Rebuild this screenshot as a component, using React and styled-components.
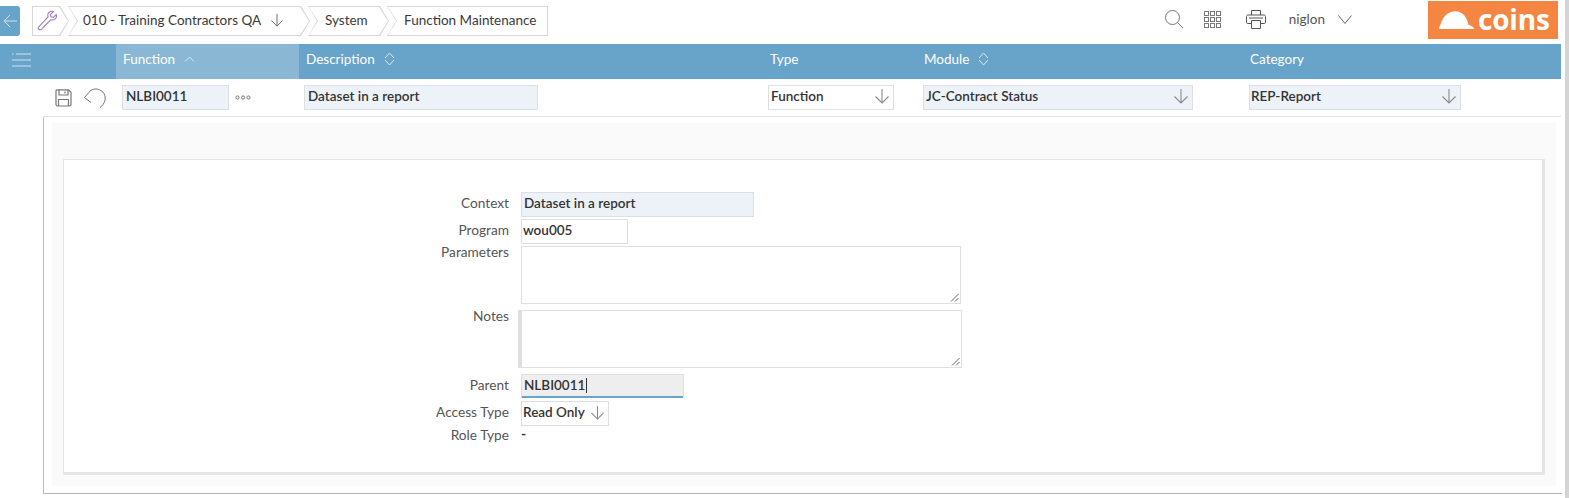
import React from "react";
import styled, { createGlobalStyle } from "styled-components";

const GlobalStyle = createGlobalStyle`
  html, body {
    margin: 0;
    padding: 0;
    background: #fff;
    overflow: hidden;
  }
  * {
    box-sizing: border-box;
  }
`;

const Page = styled.div`
  position: relative;
  width: 1569px;
  height: 498px;
  padding-right: 8px;
  font-family: Lato, "Open Sans", sans-serif;
  font-size: 13px;
  color: #333;
  overflow: hidden;
`;

const Scrollbar = styled.div`
  position: absolute;
  top: 0;
  right: 0;
  bottom: 0;
  width: 4px;
  background: #d4d4d4;
`;

const TopBar = styled.header`
  display: flex;
  align-items: flex-start;
  height: 44px;
  padding-top: 6px;
`;

const BackButton = styled.div`
  display: flex;
  align-items: center;
  justify-content: center;
  width: 20px;
  height: 30px;
  margin-right: 12px;
  background: #68a3c9;
  border-radius: 0 3px 3px 0;
`;

const Crumbs = styled.nav`
  display: flex;
`;

const crumbShape = (p) => {
  const notch = p.$first ? "" : ", 9px 50%";
  const right = p.$last
    ? "100% 0, 100% 100%"
    : "calc(100% - 9px) 0, 100% 50%, calc(100% - 9px) 100%";
  return `polygon(0 0, ${right}, 0 100%${notch})`;
};

const Crumb = styled.div`
  position: relative;
  display: flex;
  align-items: center;
  gap: ${(p) => (p.$gap ? "9px" : 0)};
  width: ${(p) => p.$width}px;
  height: 30px;
  margin-left: ${(p) => p.$overlap || 0}px;
  padding-left: ${(p) => p.$pad}px;
  padding-bottom: 2px;
  background: #d6d6d6;
  clip-path: ${crumbShape};
  font-size: 13.5px;
  color: #3a3a3a;
  white-space: nowrap;

  &::before {
    content: "";
    position: absolute;
    inset: 1px;
    background: #fff;
    clip-path: ${crumbShape};
  }
`;

const CrumbContent = styled.span`
  position: relative;
  display: flex;
  align-items: center;
`;

const TopActions = styled.div`
  display: flex;
  align-items: center;
  height: 30px;
  margin-top: -2px;
  margin-left: auto;
  margin-right: 3px;
`;

const IconSlot = styled.span`
  display: flex;
  align-items: center;
  justify-content: center;
  width: ${(p) => p.$width}px;
  color: #666;
`;

const UserName = styled.span`
  margin-left: 19px;
  font-size: 13.5px;
  color: #555;
`;

const UserCaret = styled.span`
  display: flex;
  margin-left: 13px;
  margin-right: 76px;
`;

const Logo = styled.div`
  display: flex;
  align-items: center;
  gap: 4px;
  width: 130px;
  height: 38px;
  margin-top: -3px;
  align-self: flex-start;
  padding-left: 11px;
  background: #f58542;
  color: #fff;
`;

const LogoText = styled.span`
  font-family: "Open Sans", sans-serif;
  font-size: 28px;
  font-weight: 700;
  line-height: 38px;
  letter-spacing: -0.2px;
  margin-top: -3px;
`;

const Columns = "116px 183px 464px 154px 326px 1fr";

const GridHeader = styled.div`
  display: grid;
  grid-template-columns: ${Columns};
  height: 35px;
  background: #68a3c9;
  color: #fff;
  font-size: 13.5px;
`;

const HeaderCell = styled.div`
  display: flex;
  align-items: center;
  gap: 9px;
  padding-left: 7px;
  padding-bottom: ${(p) => (p.$sorted ? 6 : 5)}px;
  background: ${(p) => (p.$active ? "#8ab8d4" : "transparent")};
`;

const MenuCell = styled.div`
  display: flex;
  align-items: center;
  padding: 0 0 3px 12px;
`;

const Row = styled.div`
  display: flex;
  align-items: center;
  height: 38px;
  margin-left: 43px;
  border-bottom: 1px solid #e4e4e4;
`;

const RowTools = styled.div`
  display: flex;
  align-items: center;
  gap: 11px;
  width: 79px;
  padding-left: 12px;
`;

const Field = styled.div`
  display: flex;
  align-items: center;
  justify-content: space-between;
  flex: none;
  width: ${(p) => p.$width}px;
  height: ${(p) => p.$height || 25}px;
  margin-left: ${(p) => p.$left || 0}px;
  padding: 0 ${(p) => (p.$select ? 3 : 2)}px 3px ${(p) => p.$pad || 3}px;
  background: ${(p) => p.$bg || "#edf2f9"};
  border: 1px solid #dcdfe3;
  font-size: 13.5px;
  font-weight: 600;
  color: #333;
  white-space: nowrap;
`;

const Dots = styled.span`
  display: flex;
  flex: none;
  margin-left: 6px;
  width: 16px;
`;

const Panel = styled.section`
  height: 377px;
  margin-left: 43px;
  margin-right: -1px;
  padding: 6px 6px 7px 8px;
  border-left: 1px solid #bdbdbd;
  border-bottom: 1px solid #b5b5b5;
`;

const PanelInner = styled.div`
  height: 100%;
  padding: 36px 11px 11px 11px;
  background: #fafafa;
`;

const Card = styled.div`
  height: 100%;
  padding-top: 32px;
  background: #fff;
  border: 1px solid #e6e6e6;
  border-width: 1px 3px 3px 1px;
`;

const FormGrid = styled.div`
  display: grid;
  grid-template-columns: 445px 1fr;
  column-gap: 12px;
  align-items: start;
`;

const Label = styled.label`
  padding-top: ${(p) => p.$top ?? 2}px;
  margin-top: ${(p) => p.$gap || 0}px;
  text-align: right;
  font-size: 13.7px;
  line-height: 18px;
  color: #555;
`;

const Control = styled.div`
  margin-top: ${(p) => p.$gap || 0}px;
  margin-left: ${(p) => p.$shift || 0}px;
`;

const TextArea = styled.div`
  position: relative;
  width: ${(p) => p.$width}px;
  height: 58px;
  background: #fff;
  border: 1px solid #dfdfdf;
  border-left: ${(p) => (p.$bar ? "4px solid #dfdfdf" : "1px solid #dfdfdf")};
`;

const ResizeGrip = styled.svg`
  position: absolute;
  right: 1px;
  bottom: 1px;
`;

const ParentField = styled(Field)`
  position: relative;
  height: 24px;
  border-bottom: 0;
  box-shadow: inset 0 -2px 0 #68a3c9;
`;

const Caret = styled.span`
  display: inline-block;
  width: 1px;
  height: 15px;
  margin-left: 1px;
  background: #333;
`;

const DashValue = styled.div`
  margin-top: ${(p) => p.$gap || 0}px;
  font-size: 14px;
  font-weight: 700;
  line-height: 18px;
`;

const InlineValue = styled.span`
  display: flex;
  align-items: center;
`;

const ArrowDown = ({ size = 16, color = "#8a8a8a" }) => (
  <svg width={size} height={size} viewBox="0 0 16 16" fill="none" stroke={color} strokeWidth="1.1">
    <path d="M8 1v14M1.5 8.500 8 15l6.500-6.500" />
  </svg>
);

const SortIcon = ({ up, down }) => (
  <svg width="11" height="16" viewBox="0 0 11 16" fill="none" stroke="#dcebf4" strokeWidth="1">
    {up && !down && <path d="M1 10.500 5.500 6 10 10.500" />}
    {up && down && <path d="M1 7 5.500 2 10 7" />}
    {down && <path d="M1 9 5.500 14 10 9" />}
  </svg>
);

const BackArrow = () => (
  <svg width="14" height="14" viewBox="0 0 14 14" fill="none" stroke="#cfe2ee" strokeWidth="1">
    <path d="M14 7H1M7 1 1 7l6 6" />
  </svg>
);

const Wrench = () => (
  <svg width="22" height="22" viewBox="0 0 24 24" fill="none" stroke="#9a7fc0" strokeWidth="1.200">
    <path d="M3 19.500 13.200 8.600c-.8-2.400.1-4.600 2-5.600 1.200-.6 2.500-.7 3.700-.2l-3.200 3 .7 2.700 2.700.7 3-3.100c.5 1.300.3 2.700-.4 3.800-1.200 1.800-3.300 2.500-5.500 1.800L6 22c-1 .9-2.200.9-3 .1-.8-.8-.8-1.800 0-2.600Z" />
  </svg>
);

const SearchIcon = () => (
  <svg width="20" height="20" viewBox="0 0 20 20" fill="none" stroke="#777" strokeWidth="1">
    <circle cx="8.500" cy="8.500" r="7" />
    <path d="m13.500 13.500 5.500 5.500" />
  </svg>
);

const GridIcon = () => (
  <svg width="17" height="17" viewBox="0 0 17 17" fill="none" stroke="#777" strokeWidth="1">
    {[0, 6, 12].map((y) =>
      [0, 6, 12].map((x) => <rect key={`${x}-${y}`} x={x + 0.5} y={y + 0.5} width="4" height="4" />)
    )}
  </svg>
);

const PrinterIcon = () => (
  <svg width="20" height="19" viewBox="0 0 20 19" fill="none" stroke="#555" strokeWidth="1">
    <path d="M5.500 5V.5h9V5M5 13.500H1.500a1 1 0 0 1-1-1v-6c0-.8.7-1.500 1.500-1.500h16c.8 0 1.500.7 1.500 1.500v6a1 1 0 0 1-1 1H15" />
    <path d="M5.500 10.500h9v8h-9z" fill="#fff" />
    <path d="M3 8h14" />
  </svg>
);

const DownCaret = () => (
  <svg width="14" height="9" viewBox="0 0 14 9" fill="none" stroke="#666" strokeWidth="1">
    <path d="m.5.500 6.500 8 6.500-8" />
  </svg>
);

const Hardhat = () => (
  <svg width="35" height="18" viewBox="0 0 35 18" fill="#fff">
    <path d="M.5 18c-.6-1-.3-2.500.8-3.500C3 7 8 .8 15.500.3 22 0 27 4 29 12l.5 2c2.500.3 5 1.500 5.500 4Z" />
  </svg>
);

const MenuIcon = () => (
  <svg width="19" height="14" viewBox="0 0 19 14" fill="none" stroke="#d3e4ef" strokeWidth="1.200">
    <path d="M0 1h1.500M4 1h15M0 7h19M0 13h19" />
  </svg>
);

const SaveIcon = () => (
  <svg width="17" height="18" viewBox="0 0 17 18" fill="none" stroke="#777" strokeWidth="1.200">
    <path d="M2 .8h11.500L16 3.200V15.500a1.500 1.500 0 0 1-1.500 1.500h-12A1.500 1.500 0 0 1 1 15.500V2A1.200 1.200 0 0 1 2 .8Z" />
    <path d="M4 1v5h9V1M10 2.500v2M3.500 17v-6.500h10V17" />
  </svg>
);

const UndoIcon = () => (
  <svg width="23" height="22" viewBox="0 0 23 22" fill="none" stroke="#777" strokeWidth="1">
    <path d="M7.500 3.500C12 .5 18 2 21 6.500c2.500 4.500 1 10.500-4 14" />
    <path d="M7.500 3.500 1.500 10.500 8 15.500" />
  </svg>
);

const DotsIcon = () => (
  <svg width="16" height="5" viewBox="0 0 16 5" fill="none" stroke="#777" strokeWidth="1">
    <circle cx="2.500" cy="2.500" r="1.600" />
    <circle cx="8" cy="2.500" r="1.600" />
    <circle cx="13.500" cy="2.500" r="1.600" />
  </svg>
);

const Grip = () => (
  <ResizeGrip width="9" height="9" viewBox="0 0 9 9" fill="none" stroke="#666" strokeWidth="1">
    <path d="M1 8.500 8.500 1M5 8.500 8.500 5" />
  </ResizeGrip>
);

const App = () => (
  <Page>
    <GlobalStyle />
    <TopBar>
      <BackButton>
        <BackArrow />
      </BackButton>
      <Crumbs>
        <Crumb $first $width={37} $pad={4}>
          <CrumbContent>
            <Wrench />
          </CrumbContent>
        </Crumb>
        <Crumb $width={242} $overlap={-1} $pad={15} $gap>
          <CrumbContent>010 - Training Contractors QA</CrumbContent>
          <CrumbContent>
            <ArrowDown size={14} color="#666" />
          </CrumbContent>
        </Crumb>
        <Crumb $width={81} $overlap={-2} $pad={17}>
          <CrumbContent>System</CrumbContent>
        </Crumb>
        <Crumb $last $width={161} $overlap={-2} $pad={17}>
          <CrumbContent>Function Maintenance</CrumbContent>
        </Crumb>
      </Crumbs>
      <TopActions>
        <IconSlot $width={20}>
          <SearchIcon />
        </IconSlot>
        <IconSlot $width={58}>
          <GridIcon />
        </IconSlot>
        <IconSlot $width={28}>
          <PrinterIcon />
        </IconSlot>
        <UserName>niglon</UserName>
        <UserCaret>
          <DownCaret />
        </UserCaret>
        <Logo>
          <Hardhat />
          <LogoText>coins</LogoText>
        </Logo>
      </TopActions>
    </TopBar>

    <GridHeader>
      <MenuCell>
        <MenuIcon />
      </MenuCell>
      <HeaderCell $active $sorted>
        Function <SortIcon up />
      </HeaderCell>
      <HeaderCell $sorted>
        Description <SortIcon up down />
      </HeaderCell>
      <HeaderCell>Type</HeaderCell>
      <HeaderCell $sorted>
        Module <SortIcon up down />
      </HeaderCell>
      <HeaderCell>Category</HeaderCell>
    </GridHeader>

    <Row>
      <RowTools>
        <SaveIcon />
        <UndoIcon />
      </RowTools>
      <Field $width={107}>NLBI0011</Field>
      <Dots>
        <DotsIcon />
      </Dots>
      <Field $width={234} $left={53}>Dataset in a report</Field>
      <Field $width={126} $left={230} $bg="#fff" $pad={2} $select>
        Function <ArrowDown />
      </Field>
      <Field $width={270} $left={29} $pad={2} $select>
        JC-Contract Status <ArrowDown />
      </Field>
      <Field $width={212} $left={56} $pad={1} $select>
        REP-Report <ArrowDown />
      </Field>
    </Row>

    <Panel>
      <PanelInner>
        <Card>
          <FormGrid>
            <Label>Context</Label>
            <Control>
              <Field $width={233} $pad={2}>Dataset in a report</Field>
            </Control>

            <Label $gap={2}>Program</Label>
            <Control $gap={2}>
              <Field $width={107} $bg="#fff" $pad={1}>wou005</Field>
            </Control>

            <Label $gap={-1} $top={0}>Parameters</Label>
            <Control $gap={2}>
              <TextArea $width={440}>
                <Grip />
              </TextArea>
            </Control>

            <Label $gap={3} $top={0}>Notes</Label>
            <Control $gap={6} $shift={-3}>
              <TextArea $width={444} $bar>
                <Grip />
              </TextArea>
            </Control>

            <Label $gap={6}>Parent</Label>
            <Control $gap={6}>
              <ParentField $width={163} $bg="#eeeeee" $pad={2}>
                <InlineValue>
                  NLBI0011
                  <Caret />
                </InlineValue>
              </ParentField>
            </Control>

            <Label $gap={3}>Access Type</Label>
            <Control $gap={3}>
              <Field $width={88} $bg="#fff" $pad={1} $select>
                Read Only <ArrowDown size={15} />
              </Field>
            </Control>

            <Label $gap={-2}>Role Type</Label>
            <DashValue $gap={-1}>-</DashValue>
          </FormGrid>
        </Card>
      </PanelInner>
    </Panel>
    <Scrollbar />
  </Page>
);

export default App;
